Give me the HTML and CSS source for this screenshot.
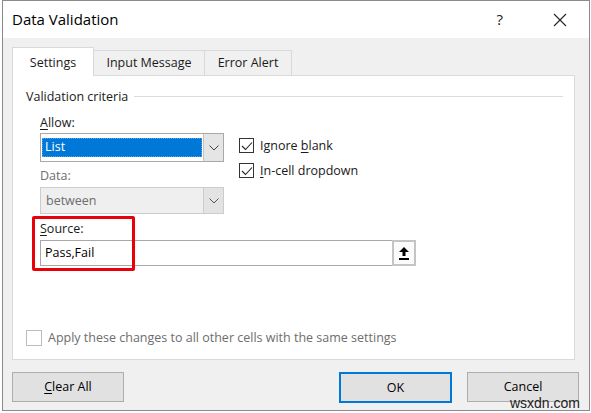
FILE: index.html
```html
<!DOCTYPE html>
<html>
<head>
<meta charset="UTF-8">
<title>Data Validation</title>
<link rel="stylesheet" href="styles.css">
</head>
<body>
<div class="dialog">
  <div class="titlebar">
    <span class="title">Data Validation</span>
    <span class="help">?</span>
    <svg class="close" width="14" height="14" viewBox="0 0 14 14"><path d="M1 1 L13 13 M13 1 L1 13" stroke="#222" stroke-width="1.1" fill="none"/></svg>
  </div>

  <div class="tabs">
    <div class="tab active tab-settings">Settings</div>
    <div class="tab tab-input">Input Message</div>
    <div class="tab tab-error">Error Alert</div>
  </div>

  <div class="panel">
    <div class="legend"><span>Validation criteria</span><i class="rule"></i></div>

    <div class="criteria">
      <div class="upper">
        <div class="left">
          <div class="label"><u>A</u>llow:</div>
          <div class="combo">
            <div class="field selected"><span class="focus">List</span></div>
            <div class="drop"><svg width="10" height="6" viewBox="0 0 10 6"><path d="M0.5 0.5 L5 5 L9.5 0.5" stroke="#444" fill="none"/></svg></div>
          </div>
          <div class="label muted">Data:</div>
          <div class="combo disabled">
            <div class="field">between</div>
            <div class="drop"><svg width="10" height="6" viewBox="0 0 10 6"><path d="M0.5 0.5 L5 5 L9.5 0.5" stroke="#555" fill="none"/></svg></div>
          </div>
        </div>
        <div class="checks">
          <div class="check"><span class="box"><svg width="12" height="10" viewBox="0 0 12 10"><path d="M1 5 L4.5 8.5 L11 1.5" stroke="#222" stroke-width="1.1" fill="none"/></svg></span><span>Ignore <u>b</u>lank</span></div>
          <div class="check"><span class="box"><svg width="12" height="10" viewBox="0 0 12 10"><path d="M1 5 L4.5 8.5 L11 1.5" stroke="#222" stroke-width="1.1" fill="none"/></svg></span><span><u>I</u>n-cell dropdown</span></div>
        </div>
      </div>

      <div class="label source-label"><u>S</u>ource:</div>
      <div class="source">
        <div class="input">Pass,Fail</div>
        <div class="collapse">
          <svg width="10" height="13" viewBox="0 0 10 13"><path d="M5 0 L10 5 L6.5 5 L6.5 9 L3.5 9 L3.5 5 L0 5 Z" fill="#000"/><rect x="0" y="11" width="10" height="2" fill="#000"/></svg>
        </div>
      </div>
    </div>

    <div class="apply"><span class="box light"></span><span>Apply these changes to all other cells with the same settings</span></div>

    <div class="highlight"></div>
  </div>

  <div class="buttons">
    <div class="btn"><u>C</u>lear All</div>
    <div class="spacer"></div>
    <div class="btn default">OK</div>
    <div class="btn">Cancel</div>
  </div>

  <div class="mark">wsxdn.com</div>
</div>
</body>
</html>
```

FILE: styles.css
```css
body {
	margin: 0;
	background: #ffffff;
	font-family: "Open Sans", "Noto Sans", sans-serif;
	font-size: 12.5px;
	color: #1a1a1a;
}
u {
	text-decoration: underline;
	text-underline-offset: 2px;
}

.dialog {
	position: relative;
	margin-left: 2px;
	width: 586px;
	height: 409px;
	border: 1px solid #8a8a8a;
	background: #f0f0f0;
	display: flex;
	flex-direction: column;
}

/* title bar */
.titlebar {
	height: 37px;
	background: #ffffff;
	display: flex;
	align-items: center;
	padding-left: 9px;
}
.title {
	font-size: 15px;
	color: #000;
	flex: 1;
	padding-bottom: 2px;
}
.help {
	font-size: 15px;
	color: #222;
	margin-right: 50px;
	padding-bottom: 2px;
}
.close {
	margin-right: 22px;
}

/* tabs */
.tabs {
	display: flex;
	align-items: flex-end;
	height: 37px;
	padding-left: 9px;
}
.tab {
	height: 24px;
	line-height: 23px;
	text-align: center;
	border: 1px solid #d9d9d9;
	border-bottom: none;
	background: #f0f0f0;
	margin-left: -1px;
}
.tab.active {
	height: 28px;
	line-height: 30px;
	background: #ffffff;
	position: relative;
	z-index: 1;
	margin-bottom: -1px;
	margin-left: 0;
}
.tab-settings { width: 80px; }
.tab-input { width: 110px; }
.tab-error { width: 86px; }

/* tab page */
.panel {
	position: relative;
	margin-left: 9px;
	width: 563px;
	height: 285px;
	border: 1px solid #d9d9d9;
	background: #ffffff;
	display: flex;
	flex-direction: column;
	padding: 11px 0 0 13px;
	box-sizing: border-box;
}
.legend {
	display: flex;
	align-items: center;
	height: 18px;
	padding-right: 11px;
}
.legend .rule {
	flex: 1;
	height: 1px;
	background: #dcdcdc;
	margin-left: 6px;
}

.criteria {
	padding-left: 14px;
	margin-top: 9px;
}
.upper {
	display: flex;
}
.left {
	width: 184px;
	display: flex;
	flex-direction: column;
}
.label {
	height: 18px;
	line-height: 18px;
}
.label.muted {
	color: #6d6d6d;
	margin-top: 5px;
}

.combo {
	height: 29px;
	margin-top: 1px;
	border: 1px solid #a8a8a8;
	box-sizing: border-box;
	display: flex;
	background: #ffffff;
}
.combo .field {
	flex: 1;
	padding: 4px 1px;
	display: flex;
}
.combo .field.selected .focus {
	flex: 1;
	background: #0078d7;
	color: #ffffff;
	line-height: 17px;
	padding-left: 3px;
	outline: 1px dotted #5aa0e0;
	outline-offset: -1px;
}
.combo .drop {
	width: 19px;
	background: #e5e5e5;
	border-left: 1px solid #c4c4c4;
	display: flex;
	align-items: center;
	justify-content: center;
}
.combo.disabled {
	height: 27px;
	margin-top: 2px;
	background: #efefef;
	border-color: #cccccc;
	color: #6d6d6d;
}
.combo.disabled .field {
	padding: 0 5px;
	align-items: center;
}
.combo.disabled .drop {
	background: #e3e3e3;
	border-left-color: #cccccc;
}

.checks {
	margin-left: 15px;
	margin-top: 19px;
}
.check {
	display: flex;
	align-items: center;
	height: 25px;
}
.box {
	width: 13px;
	height: 13px;
	border: 1px solid #333333;
	display: inline-flex;
	align-items: center;
	justify-content: center;
	margin-right: 6px;
	background: #ffffff;
}
.box.light {
	border-color: #bcbcbc;
	width: 14px;
	height: 14px;
	margin-right: 6px;
}

.source-label {
	margin-top: 6px;
}
.source {
	display: flex;
	width: 376px;
	height: 26px;
	margin-top: 2px;
}
.source .input {
	flex: 1;
	border: 1px solid #a8a8a8;
	border-right: none;
	line-height: 24px;
	padding-left: 4px;
	color: #000;
}
.source .collapse {
	width: 20px;
	border: 2px solid #c4c4c4;
	background: #fbfbfb;
	display: flex;
	align-items: center;
	justify-content: center;
}

.apply {
	margin-top: auto;
	margin-bottom: 13px;
	display: flex;
	align-items: center;
	color: #6d6d6d;
}

/* red marker round the source field */
.highlight {
	position: absolute;
	left: 19px;
	top: 140px;
	width: 97px;
	height: 49px;
	border: 3px solid #e8000b;
	border-radius: 2px;
}

/* bottom buttons */
.buttons {
	display: flex;
	padding: 12px 10px 0 9px;
	gap: 15px;
}
.spacer {
	flex: 1;
}
.btn {
	width: 110px;
	height: 28px;
	line-height: 28px;
	text-align: center;
	border: 1px solid #adadad;
	background: #e1e1e1;
	color: #000;
}
.btn.default {
	width: 109px;
	height: 27px;
	line-height: 27px;
	border: 2px solid #0078d7;
}

.mark {
	position: absolute;
	right: 9px;
	bottom: 0px;
	font-family: "Liberation Sans", Arial, sans-serif;
	font-size: 14px;
	color: #222;
	line-height: 14px;
}
```
